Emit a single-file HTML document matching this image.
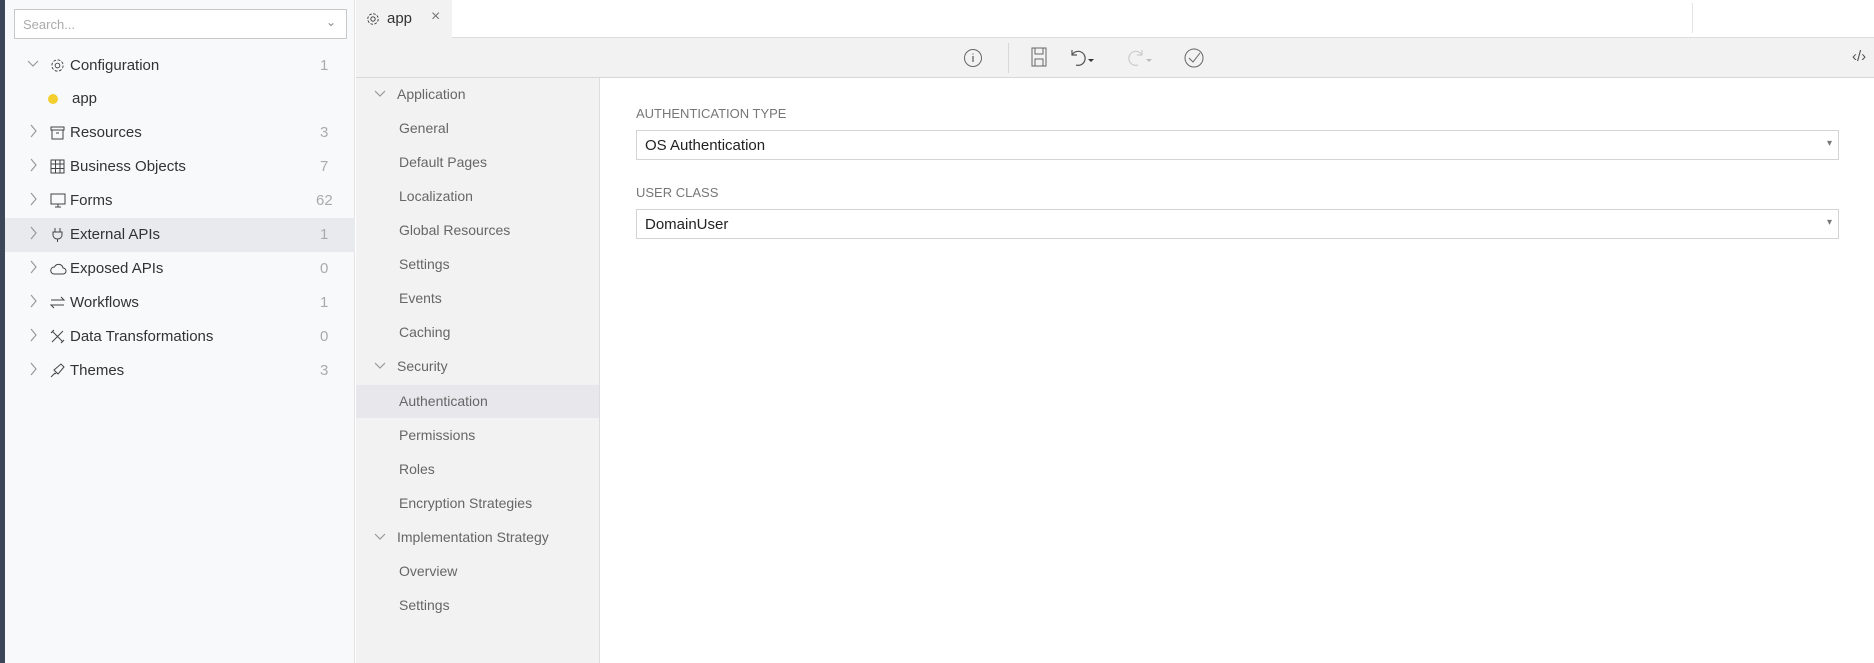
<!DOCTYPE html>
<html><head><meta charset="utf-8"><style>
*{box-sizing:border-box;margin:0;padding:0}
body{width:1874px;height:663px;overflow:hidden;font-family:"Liberation Sans",sans-serif;background:#fff;position:relative;color:#333}
.abs{position:absolute}
#strip{left:0;top:0;width:5px;height:663px;background:#3b4658}
#left{left:5px;top:0;width:350px;height:663px;background:#f8f9fb;border-right:1px solid #e3e3e3}
#search{left:9px;top:9px;width:333px;height:30px;border:1px solid #c8c8c8;background:#fff;font-size:13px;color:#aaa;padding:7px 8px}
.row{position:absolute;left:0;width:350px;height:34px;font-size:15px;color:#333}
.row .chev{position:absolute;left:22px;top:8px}
.row .ic{position:absolute;left:45px;top:9px}
.row .lb{position:absolute;left:65px;top:8px}
.row .ct{position:absolute;left:315px;top:8px;color:#aaa}
#tabbar{left:356px;top:0;width:1518px;height:38px;background:#fff;border-bottom:1px solid #ddd}
#tab{left:356px;top:0;width:96px;height:38px;background:#f2f2f2;font-size:15px}
#toolbar{left:356px;top:38px;width:1518px;height:40px;background:#f2f2f2;border-bottom:1px solid #d8d8d8}
#mid{left:356px;top:78px;width:244px;height:585px;background:#f2f2f2;border-right:1px solid #ddd}
.m{position:absolute;left:0;width:243px;height:33px;font-size:14px;color:#666}
.m span{position:absolute;top:8px}
.lab{font-size:13px;color:#777;left:636px}
.sel{left:636px;width:1203px;height:30px;border:1px solid #d4d4d4;font-size:15px;color:#222;padding:6px 8px}
.sel::after{content:"▾";position:absolute;right:6px;top:7px;font-size:10px;color:#777}
svg{display:block}
</style></head><body>
<div id="strip" class="abs"></div>
<div id="left" class="abs">
<div id="search" class="abs">Search...<span style="position:absolute;right:10px;top:5px;color:#888;font-size:12px">⌄</span></div>
<div class="row" style="top:49px"><svg class="chev" width="12" height="14" viewBox="0 0 12 14"><path d="M1 4l5 5 5-5" fill="none" stroke="#999" stroke-width="1.2"/></svg><svg class="ic" width="15" height="15" viewBox="0 0 16 16"><circle cx="8" cy="8" r="2.5" fill="none" stroke="#444"/><circle cx="8" cy="8" r="6" fill="none" stroke="#444" stroke-dasharray="3 1.7"/></svg><span class="lb">Configuration</span><span class="ct">1</span></div>
<div class="row" style="top:82px"><span style="position:absolute;left:43px;top:12px;width:10px;height:10px;border-radius:50%;background:#f2cf2e"></span><span class="lb" style="left:67px">app</span></div>
<div class="row" style="top:116px"><svg class="chev" width="12" height="14"><path d="M4 1l5 6-5 6" fill="none" stroke="#999" stroke-width="1.2"/></svg><svg class="ic" width="15" height="15"><path d="M1 2h13v3H1zM2 5v9h11V5M6 8h3" fill="none" stroke="#444"/></svg><span class="lb">Resources</span><span class="ct">3</span></div>
<div class="row" style="top:150px"><svg class="chev" width="12" height="14"><path d="M4 1l5 6-5 6" fill="none" stroke="#999" stroke-width="1.2"/></svg><svg class="ic" width="15" height="15"><path d="M1 1h13v13H1zM1 5h13M1 9.5h13M5.5 1v13M10 1v13" fill="none" stroke="#444"/></svg><span class="lb">Business Objects</span><span class="ct">7</span></div>
<div class="row" style="top:184px"><svg class="chev" width="12" height="14"><path d="M4 1l5 6-5 6" fill="none" stroke="#999" stroke-width="1.2"/></svg><svg class="ic" width="16" height="15"><path d="M1 1h14v10H1zM8 11v3M5 14h6" fill="none" stroke="#444"/></svg><span class="lb">Forms</span><span class="ct" style="left:311px">62</span></div>
<div class="row" style="top:218px;background:#e9eaee"><svg class="chev" width="12" height="14"><path d="M4 1l5 6-5 6" fill="none" stroke="#999" stroke-width="1.2"/></svg><svg class="ic" width="15" height="15"><path d="M5 1v4M10 1v4M3 5h9v3a4.5 4 0 0 1-9 0zM7.5 12v3" fill="none" stroke="#444"/></svg><span class="lb">External APIs</span><span class="ct">1</span></div>
<div class="row" style="top:252px"><svg class="chev" width="12" height="14"><path d="M4 1l5 6-5 6" fill="none" stroke="#999" stroke-width="1.2"/></svg><svg class="ic" width="17" height="15"><path d="M4 13h9a3 3 0 0 0 0-6 4.5 4.5 0 0 0-8.5-1A3.5 3.5 0 0 0 4 13z" fill="none" stroke="#444"/></svg><span class="lb">Exposed APIs</span><span class="ct">0</span></div>
<div class="row" style="top:286px"><svg class="chev" width="12" height="14"><path d="M4 1l5 6-5 6" fill="none" stroke="#999" stroke-width="1.2"/></svg><svg class="ic" width="15" height="15"><path d="M1 5h13l-3-3M14 10H1l3 3" fill="none" stroke="#444"/></svg><span class="lb">Workflows</span><span class="ct">1</span></div>
<div class="row" style="top:320px"><svg class="chev" width="12" height="14"><path d="M4 1l5 6-5 6" fill="none" stroke="#999" stroke-width="1.2"/></svg><svg class="ic" width="15" height="15"><path d="M2 2l11 11M13 2L2 13M1 4l3-3M11 14l3-3" fill="none" stroke="#444"/></svg><span class="lb">Data Transformations</span><span class="ct">0</span></div>
<div class="row" style="top:354px"><svg class="chev" width="12" height="14"><path d="M4 1l5 6-5 6" fill="none" stroke="#999" stroke-width="1.2"/></svg><svg class="ic" width="15" height="15"><path d="M1 14l4-4M4 7l7-6 3 3-6 7zM5 10l1 1" fill="none" stroke="#444"/></svg><span class="lb">Themes</span><span class="ct">3</span></div>
</div>
<div id="tabbar" class="abs"></div>
<div class="abs" style="left:1692px;top:3px;width:1px;height:30px;background:#e3e3e3"></div>
<div id="tab" class="abs"><svg style="position:absolute;left:10px;top:12px" width="14" height="14" viewBox="0 0 16 16"><circle cx="8" cy="8" r="2.5" fill="none" stroke="#333"/><circle cx="8" cy="8" r="6" fill="none" stroke="#333" stroke-dasharray="3 1.7"/></svg><span style="position:absolute;left:31px;top:10px">app</span><span style="position:absolute;left:75px;top:8px;color:#777;font-size:16px">×</span></div>
<div id="toolbar" class="abs">
<svg style="position:absolute;left:607px;top:10px" width="20" height="20"><circle cx="10" cy="10" r="8.5" fill="none" stroke="#666"/><path d="M10 8v6M10 5.5v1" stroke="#666" stroke-width="1.3"/></svg>
<div style="position:absolute;left:652px;top:5px;width:1px;height:30px;background:#d8d8d8"></div>
<svg style="position:absolute;left:675px;top:9px" width="16" height="20"><path d="M1 1h14v18H1zM4 1v6h8V1M4 19v-7h8v7" fill="none" stroke="#666"/></svg>
<svg style="position:absolute;left:713px;top:9px" width="26" height="22"><path d="M3 3v5h5M3 8a7 7 0 1 1 4 10" fill="none" stroke="#555" stroke-width="1.2"/><path d="M19 12h6l-3 3z" fill="#333"/></svg>
<svg style="position:absolute;left:771px;top:9px" width="26" height="22"><path d="M15 3v5h-5M15 8a7 7 0 1 0-4 10" fill="none" stroke="#ccc" stroke-width="1.2"/><path d="M19 12h6l-3 3z" fill="#bbb"/></svg>
<svg style="position:absolute;left:827px;top:9px" width="22" height="22"><circle cx="11" cy="11" r="9" fill="none" stroke="#666"/><path d="M6 11l4 4 7-9" fill="none" stroke="#666"/></svg>
<span style="position:absolute;left:1496px;top:10px;font-size:15px;color:#555">‹/›</span>
</div>
<div id="mid" class="abs">
<div class="m" style="top:0"><svg style="position:absolute;left:18px;top:11px" width="12" height="10"><path d="M1 2l5 5 5-5" fill="none" stroke="#999" stroke-width="1.2"/></svg><span style="left:41px">Application</span></div>
<div class="m" style="top:34px"><span style="left:43px">General</span></div>
<div class="m" style="top:68px"><span style="left:43px">Default Pages</span></div>
<div class="m" style="top:102px"><span style="left:43px">Localization</span></div>
<div class="m" style="top:136px"><span style="left:43px">Global Resources</span></div>
<div class="m" style="top:170px"><span style="left:43px">Settings</span></div>
<div class="m" style="top:204px"><span style="left:43px">Events</span></div>
<div class="m" style="top:238px"><span style="left:43px">Caching</span></div>
<div class="m" style="top:272px"><svg style="position:absolute;left:18px;top:11px" width="12" height="10"><path d="M1 2l5 5 5-5" fill="none" stroke="#999" stroke-width="1.2"/></svg><span style="left:41px">Security</span></div>
<div class="m" style="top:307px;background:#e8e8ec"><span style="left:43px">Authentication</span></div>
<div class="m" style="top:341px"><span style="left:43px">Permissions</span></div>
<div class="m" style="top:375px"><span style="left:43px">Roles</span></div>
<div class="m" style="top:409px"><span style="left:43px">Encryption Strategies</span></div>
<div class="m" style="top:443px"><svg style="position:absolute;left:18px;top:11px" width="12" height="10"><path d="M1 2l5 5 5-5" fill="none" stroke="#999" stroke-width="1.2"/></svg><span style="left:41px">Implementation Strategy</span></div>
<div class="m" style="top:477px"><span style="left:43px">Overview</span></div>
<div class="m" style="top:511px"><span style="left:43px">Settings</span></div>
</div>
<div class="abs lab" style="top:106px">AUTHENTICATION TYPE</div>
<div class="abs sel" style="top:130px">OS Authentication</div>
<div class="abs lab" style="top:185px">USER CLASS</div>
<div class="abs sel" style="top:209px">DomainUser</div>
</body></html>
